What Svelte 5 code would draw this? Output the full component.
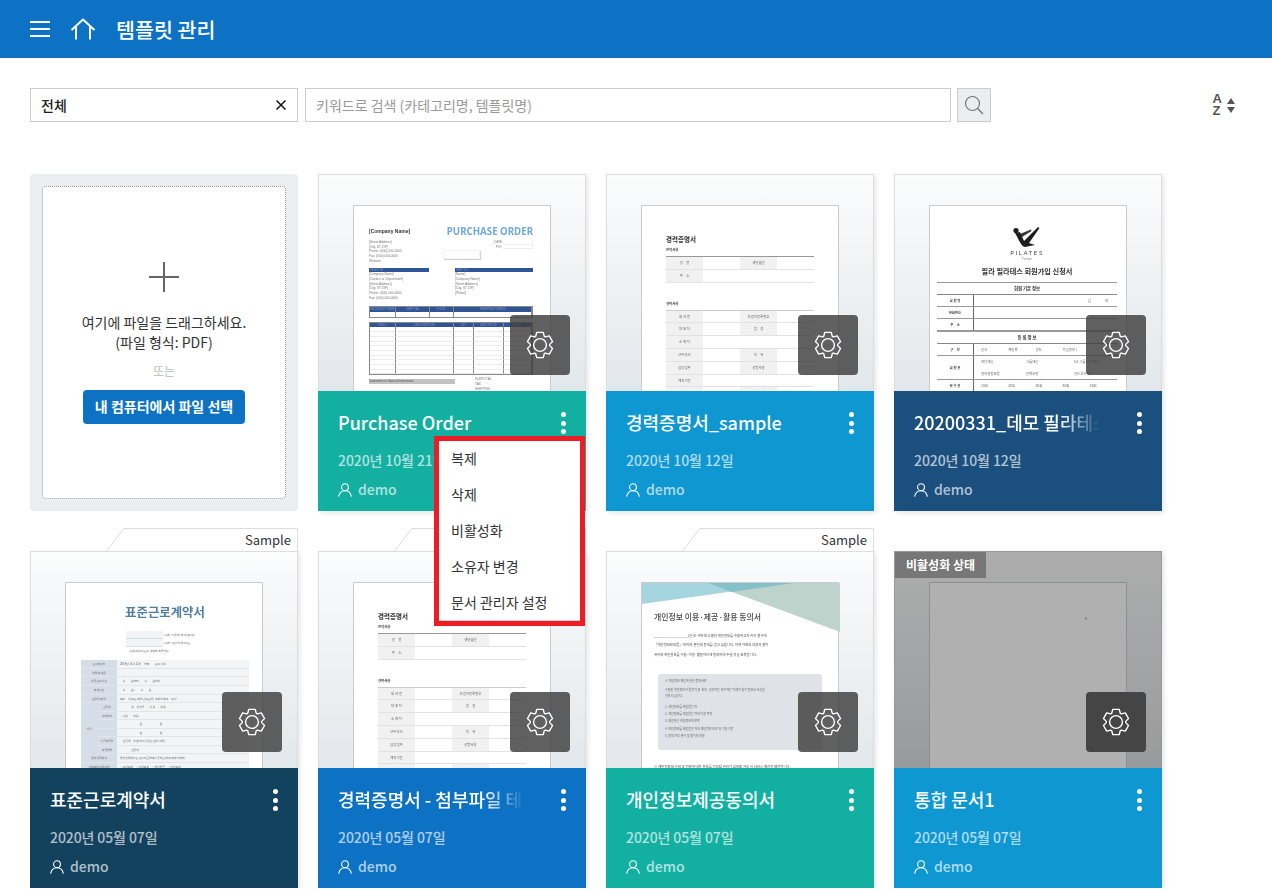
<script>
  const cards = [
    { title: 'Purchase Order', date: '2020년 10월 21일', color: '#13b0a2', doc: 'po', menu: true },
    { title: '경력증명서_sample', date: '2020년 10월 12일', color: '#0e97d0', doc: 'career' },
    { title: '20200331_데모 필라테스 회원가입', date: '2020년 10월 12일', color: '#1a4f7e', doc: 'pilates', long: true },
    { title: '표준근로계약서', date: '2020년 05월 07일', color: '#13425f', doc: 'labor', sample: true },
    { title: '경력증명서 - 첨부파일 테스트', date: '2020년 05월 07일', color: '#0e72c4', doc: 'career', sample: true, long: true },
    { title: '개인정보제공동의서', date: '2020년 05월 07일', color: '#13b0a2', doc: 'privacy', sample: true },
    { title: '통합 문서1', date: '2020년 05월 07일', color: '#0e97d0', doc: 'blank', disabled: true }
  ];

  const menuItems = ['복제', '삭제', '비활성화', '소유자 변경', '문서 관리자 설정'];

  function gearPath() {
    const out = [];
    const step = (Math.PI * 2) / 6;
    for (let i = 0; i < 6; i++) {
      const c = -Math.PI / 2 + i * step;
      const pts = [
        [9.7, c - 0.46],
        [13, c - 0.25],
        [13, c + 0.25],
        [9.7, c + 0.46]
      ];
      for (const [r, a] of pts) {
        out.push(`${(14 + r * Math.cos(a)).toFixed(2)} ${(14 + r * Math.sin(a)).toFixed(2)}`);
      }
    }
    return 'M' + out.join('L') + 'Z';
  }

  const addressLines = ['[Street Address]', '[City, ST ZIP]', 'Phone: (000) 000-0000', 'Fax: (000) 000-0000', 'Website:'];
  const vendorLines = ['[Company Name]', '[Contact or Department]', '[Street Address]', '[City, ST ZIP]', 'Phone: (000) 000-0000', 'Fax: (000) 000-0000'];
  const shipLines = ['[Name]', '[Company Name]', '[Street Address]', '[City, ST ZIP]', '[Phone]'];

  const careerTop = [['성　명', '생년월일'], ['주　소', '']];
  const careerRows = [
    ['회 사 명', '사업자등록번호'],
    ['대 표 자', '업　종'],
    ['소 재 지', ''],
    ['근무부서', '직　위'],
    ['담당업무', '상병사항'],
    ['재직기간', ''],
    ['퇴사사유', '재직증명서', '첨부하기']
  ];

  const laborTop = [
    ['근로개시일', '2019년 11월 21일　부터　　근로 장소'],
    ['업무의 내용', ''],
    ['소정근로시간', '　시　　분부터　　시　　분까지'],
    ['휴게시간', '　시　　분~　　시　　분'],
    ['근무일/휴일', '매주　일(또는 매일단위)근무, 주휴일 매주　요일']
  ];
  const laborWage = [
    ['산정액', '　　　　원　상여금　○있음　○없음'],
    ['기타급여', '○있음　○없음'],
    ['', '　　　　　　　원,　　　　　　원'],
    ['', '　　　　　　　원,　　　　　　원'],
    ['임금지급일', '　산정액　일(휴일의 경우는 전일 지급)'],
    ['지급방법', '　　　　산정액']
  ];
  const laborBottom = [
    ['연차유급휴가', '연차유급휴가는 근로기준법에서 정하는 바에 따라 부여함'],
    ['사회보험 적용여부', '□고용보험　□산재보험　□국민연금　□건강보험']
  ];

  const privacyList = ['개인정보를 제공받는 자', '개인정보를 제공받는 자의 이용 목적', '제공하는 개인정보의 항목', '개인정보를 제공받은 자의 개인정보 보유 및 이용 기간', '동의 거부 권리 및 불이익 내용'];
</script>

{#snippet poDoc()}
  <div class="page po">
    <div class="po-head">
      <strong class="po-company">[Company Name]</strong>
      <strong class="po-title">PURCHASE ORDER</strong>
    </div>
    <div class="po-info">
      <div class="tiny-lines">
        {#each addressLines as line}<div>{line}</div>{/each}
      </div>
      <div class="po-fields">
        <div class="po-field"><span>DATE</span><i></i></div>
        <div class="po-field"><span>PO#</span><i></i></div>
      </div>
    </div>
    <div class="po-stamp"></div>
    <div class="po-parties">
      <div class="po-party">
        <div class="po-bar">VENDOR</div>
        <div class="tiny-lines">{#each vendorLines as line}<div>{line}</div>{/each}</div>
      </div>
      <div class="po-party wide">
        <div class="po-bar">SHIP TO</div>
        <div class="tiny-lines">{#each shipLines as line}<div>{line}</div>{/each}</div>
      </div>
    </div>
    <div class="po-req">
      {#each ['REQUISITIONER', 'SHIP VIA', 'F.O.B.', 'SHIPPING TERMS'] as h}<div class="po-cell head">{h}</div>{/each}
      {#each [0, 1, 2, 3] as n (n)}<div class="po-cell"></div>{/each}
    </div>
    <div class="po-items">
      {#each ['ITEM #', 'DESCRIPTION', 'QTY', 'UNIT PRICE', 'TOTAL'] as h}<div class="po-cell head">{h}</div>{/each}
      {#each Array(50) as _, n (n)}<div class="po-cell row"></div>{/each}
    </div>
    <div class="po-foot">
      <div class="po-comments">Comments or Special Instructions</div>
      <div class="tiny-lines po-totals">
        <div>SUBTOTAL</div><div>TAX</div><div>SHIPPING</div><div>OTHER</div>
      </div>
    </div>
  </div>
{/snippet}

{#snippet careerDoc()}
  <div class="page career">
    <h4>경력증명서</h4>
    <p class="career-label">인적사항</p>
    <div class="career-table heavy">
      {#each careerTop as row}
        <div class="career-row">
          <span class="career-key">{row[0]}</span><span></span>
          {#if row[1]}<span class="career-key">{row[1]}</span>{/if}<span></span>
        </div>
      {/each}
    </div>
    <p class="career-label second">경력사항</p>
    <div class="career-table">
      {#each careerRows as row}
        <div class="career-row">
          <span class="career-key">{row[0]}</span><span></span>
          {#if row[1]}<span class="career-key">{row[1]}</span>{/if}<span>{row[2] || ''}</span>
        </div>
      {/each}
    </div>
  </div>
{/snippet}

{#snippet pilatesDoc()}
  <div class="page pilates">
    <svg class="pilates-logo" viewBox="0 0 30 22" width="30" height="22">
      <circle cx="4" cy="4.5" r="2.6" fill="#1c1c1c" />
      <path d="M3 7 L8 6 L12 15 L26 1 L27.5 2 L17 17 L23 19 L13 21 C9 20 7 14 3 7 Z" fill="#1c1c1c" />
      <path d="M8 8 L19 3.5 L19.5 5 L10 11 Z" fill="#333" />
    </svg>
    <div class="pilates-name">PILATES</div>
    <div class="pilates-script">Partner</div>
    <div class="pilates-title">필라 필라테스 회원가입 신청서</div>
    <div class="pilates-section">회원 기본 정보</div>
    <div class="pilates-row"><b>회 원 명</b><span class="split"><em>남</em><em>여</em></span></div>
    <div class="pilates-row"><b>전화번호</b><span></span></div>
    <div class="pilates-row"><b>주　소</b><span></span></div>
    <div class="pilates-section second">등 록 정 보</div>
    <div class="pilates-row"><b>구　분</b><span class="flow"><em>신규</em><em>재등록</em><em>양도</em><em>가입경로 (</em></span></div>
    <div class="pilates-row tall">
      <b>회 원 권</b>
      <span class="flow double">
        <em>개인레슨</em><em>그룹레슨</em><em>5:1 그룹 기구필라</em>
        <em>형색실천요법</em><em>산책운동</em><em>인드호거북 (</em>
      </span>
    </div>
    <div class="pilates-row"><b>횟 수 권</b><span class="flow"><em>10회</em><em>20회</em><em>30회</em><em>40회</em><em>50회</em></span></div>
  </div>
{/snippet}

{#snippet laborDoc()}
  <div class="page labor">
    <div class="labor-title">표준근로계약서</div>
    <div class="labor-parties">
      <div class="labor-party"><i></i><span>(이하 "사업주"라 함)과(와)</span></div>
      <div class="labor-party"><i></i><span>(이하 "근로자"라 함)은</span></div>
    </div>
    <div class="labor-note">다음과 같이 근로 계약을 체결한다.</div>
    <div class="labor-table">
      {#each laborTop as row}
        <div class="labor-row">
          <span class="labor-key">{row[0]}</span>
          <span class="labor-val">{row[1]}</span>
        </div>
      {/each}
      <div class="labor-wage">
        <span class="labor-key wage-key">임금</span>
        <div>
          {#each laborWage as row}
            <div class="labor-row sub">
              <span class="labor-key">{row[0]}</span>
              <span class="labor-val">{row[1]}</span>
            </div>
          {/each}
        </div>
      </div>
      {#each laborBottom as row}
        <div class="labor-row">
          <span class="labor-key">{row[0]}</span>
          <span class="labor-val">{row[1]}</span>
        </div>
      {/each}
    </div>
  </div>
{/snippet}

{#snippet privacyDoc()}
  <div class="page privacy">
    <svg class="privacy-art" viewBox="0 0 198 50" width="198" height="50">
      <polygon points="0,0 152,0 0,21" fill="#a5d6e0" />
      <polygon points="66,0 198,0 198,49" fill="#bfd3cd" />
      <polygon points="66,0 152,0 90,9" fill="#86c0c8" />
    </svg>
    <div class="privacy-title">개인정보 이용·제공·활용 동의서</div>
    <p class="privacy-text">
      __________________(은)는 귀하의 소중한 개인정보를 수집하고자 하는 경우에<br />
      「개인정보보호법」에 따라 본인의 동의를 얻고 있습니다. 이에 아래의 내용과 같이<br />
      귀하의 개인정보를 수집·이용·활용하는데 동의하여 주실 것을 요청합니다.
    </p>
    <div class="privacy-box">
      <p>※ 개인정보 제공에 관한 동의사항</p>
      <p>수집된 개인정보가 법적 이용·처리·공유되는 경우에는 아래와 같이 필요성 사상을<br />알려 드립니다.</p>
      <ol>
        {#each privacyList as item, i}<li>{i + 1}. {item}</li>{/each}
      </ol>
    </div>
    <p class="privacy-text last">※ 개인정보의 수집 및 이용에 대한 동의를 거부할 권리가 있으며 거부 시 서비스 제공이 제한됩니다.</p>
  </div>
{/snippet}

<header class="topbar">
  <svg width="20" height="16" viewBox="0 0 20 16" class="burger">
    <path d="M0 1H20M0 8H20M0 15H20" stroke="#fff" stroke-width="2" />
  </svg>
  <svg width="26" height="22" viewBox="0 0 26 22" class="home">
    <path d="M1.5 12 L13 1.5 L24.5 12 M6 8.5 V21.5 M20 8.5 V21.5" fill="none" stroke="#fff" stroke-width="2" />
  </svg>
  <h1>템플릿 관리</h1>
</header>

<div class="toolbar">
  <div class="select">
    <span>전체</span>
    <svg width="10" height="10" viewBox="0 0 10 10">
      <path d="M0.5 0.5L9.5 9.5M9.5 0.5L0.5 9.5" stroke="#111" stroke-width="1.5" />
    </svg>
  </div>
  <div class="search">키워드로 검색 (카테고리명, 템플릿명)</div>
  <button class="search-btn" aria-label="검색">
    <svg width="20" height="20" viewBox="0 0 20 20">
      <circle cx="8.5" cy="8.5" r="7" fill="none" stroke="#777" stroke-width="1.2" />
      <path d="M13.6 13.6L19 19" stroke="#777" stroke-width="1.4" />
    </svg>
  </button>
  <div class="sort">
    <div class="sort-letters"><span>A</span><span>Z</span></div>
    <div class="sort-arrows"><i class="up"></i><i class="down"></i></div>
  </div>
</div>

<main class="grid">
  <section class="upload">
    <div class="drop">
      <svg width="30" height="30" viewBox="0 0 30 30">
        <path d="M15 0V30M0 15H30" stroke="#666" stroke-width="2" />
      </svg>
      <p class="drop-text">여기에 파일을 드래그하세요.<br />(파일 형식: PDF)</p>
      <p class="drop-or">또는</p>
      <button class="drop-btn">내 컴퓨터에서 파일 선택</button>
    </div>
  </section>

  {#each cards as card}
    <article class="card" class:disabled={card.disabled}>
      {#if card.sample}
        <div class="sample">
          <svg width="192" height="24" viewBox="0 0 192 24">
            <path d="M0.5 23.5 L17.5 0.5 H191.5 V23.5" fill="#fff" stroke="#ddd" />
          </svg>
          <span>Sample</span>
        </div>
      {/if}
      <div class="thumb">
        {#if card.doc === 'po'}
          {@render poDoc()}
        {:else if card.doc === 'career'}
          {@render careerDoc()}
        {:else if card.doc === 'pilates'}
          {@render pilatesDoc()}
        {:else if card.doc === 'labor'}
          {@render laborDoc()}
        {:else if card.doc === 'privacy'}
          {@render privacyDoc()}
        {:else}
          <div class="page blank"><i></i></div>
        {/if}
        {#if card.disabled}<div class="badge">비활성화 상태</div>{/if}
        <div class="gear">
          <svg width="28" height="28" viewBox="0 0 28 28">
            <path d={gearPath()} fill="none" stroke="#fff" stroke-width="1.4" stroke-linejoin="round" />
            <circle cx="14" cy="14" r="6.4" fill="none" stroke="#fff" stroke-width="1.4" />
          </svg>
        </div>
      </div>
      <div class="info" style={`background: ${card.color}`}>
        <div class="info-head">
          <h3 class:long={card.long}>{card.title}</h3>
          <div class="dots"><i></i><i></i><i></i></div>
        </div>
        <div class="date">{card.date}</div>
        <div class="owner">
          <svg width="14" height="14" viewBox="0 0 14 14">
            <circle cx="7" cy="4.2" r="3.4" fill="none" stroke="#fff" stroke-width="1.1" />
            <path d="M0.6 13.6 C1.4 9.8 3.8 7.8 7 7.8 C10.2 7.8 12.6 9.8 13.4 13.6" fill="none" stroke="#fff" stroke-width="1.1" />
          </svg>
          <span>demo</span>
        </div>
      </div>
      {#if card.menu}
        <ul class="menu">
          {#each menuItems as item}<li>{item}</li>{/each}
        </ul>
      {/if}
    </article>
  {/each}
</main>

<style>
  :global(body) {
    font-family: "Noto Sans CJK KR", "Noto Sans", sans-serif;
    color: #333;
    background: #fff;
  }

  p, h1, h3, h4, ul, ol {
    margin: 0;
    padding: 0;
  }

  .topbar {
    height: 58px;
    display: flex;
    align-items: center;
    padding-left: 30px;
    background: #0e72c4;
  }

  .home {
    margin-left: 20px;
    margin-top: -1px;
  }

  .topbar h1 {
    margin-left: 20px;
    font-size: 20.6px;
    font-weight: 500;
    color: #fff;
  }

  .toolbar {
    display: flex;
    align-items: center;
    height: 34px;
    margin-top: 30px;
    padding: 0 37px 0 30px;
    font-size: 14px;
  }

  .select {
    width: 268px;
    height: 34px;
    box-sizing: border-box;
    display: flex;
    align-items: center;
    justify-content: space-between;
    padding: 0 11px 0 10px;
    border: 1px solid #ccc;
    font-weight: 500;
    color: #222;
  }

  .search {
    width: 646px;
    height: 34px;
    box-sizing: border-box;
    margin-left: 7px;
    padding: 0 10px;
    line-height: 32px;
    border: 1px solid #ccc;
    color: #999;
  }

  .search-btn {
    width: 34px;
    height: 34px;
    margin-left: 6px;
    padding: 0;
    display: grid;
    place-items: center;
    border: 1px solid #ccc;
    background: #ebeef1;
  }

  .sort {
    margin-left: auto;
    display: flex;
    align-items: center;
    gap: 5px;
  }

  .sort-letters {
    display: grid;
    font-family: "Liberation Sans", sans-serif;
    font-size: 13px;
    font-weight: 700;
    line-height: 12px;
    color: #555;
  }

  .sort-arrows {
    display: grid;
    gap: 3px;
  }

  .sort-arrows i {
    width: 0;
    height: 0;
    border-left: 4px solid transparent;
    border-right: 4px solid transparent;
  }

  .sort-arrows .up {
    border-bottom: 6px solid #555;
  }

  .sort-arrows .down {
    border-top: 6px solid #555;
  }

  .grid {
    display: grid;
    grid-template-columns: repeat(4, 268px);
    column-gap: 20px;
    row-gap: 40px;
    margin-top: 52px;
    padding-left: 30px;
  }

  .upload {
    height: 337px;
    box-sizing: border-box;
    padding: 12px;
    border-radius: 4px;
    background: #ebeef1;
  }

  .drop {
    height: 100%;
    box-sizing: border-box;
    display: flex;
    flex-direction: column;
    align-items: center;
    padding-top: 75px;
    border: 1px dotted #999;
    border-radius: 4px;
    background: #fff;
  }

  .drop-text {
    margin-top: 20px;
    font-size: 14px;
    line-height: 20px;
    text-align: center;
    color: #333;
  }

  .drop-or {
    margin-top: 9px;
    font-size: 12px;
    line-height: 20px;
    color: #bbb;
  }

  .drop-btn {
    width: 162px;
    height: 34px;
    margin-top: 9px;
    padding: 0 0 2px;
    border: 0;
    border-radius: 4px;
    background: #0e72c4;
    color: #fff;
    font-family: inherit;
    font-size: 14px;
    font-weight: 700;
  }

  .card {
    position: relative;
    height: 337px;
    box-shadow: 2px 2px 5px rgba(0, 0, 0, 0.1);
  }

  .sample {
    position: absolute;
    right: 0;
    top: -23px;
    width: 192px;
    height: 24px;
  }

  .sample svg {
    display: block;
  }

  .sample span {
    position: absolute;
    right: 7px;
    top: 1px;
    font-size: 13px;
    line-height: 22px;
    color: #333;
  }

  .thumb {
    position: relative;
    height: 217px;
    box-sizing: border-box;
    overflow: hidden;
    padding: 30px 0 0 34px;
    border: 1px solid #ddd;
    border-bottom: 0;
    background: linear-gradient(#fbfcfc, #e2e7eb);
  }

  .disabled .thumb {
    border-color: #999;
    background: linear-gradient(#adadad, #989b9d);
  }

  .page {
    width: 198px;
    height: 300px;
    box-sizing: border-box;
    border: 1px solid #ccc;
    background: #fff;
    color: #333;
    filter: blur(0.45px);
  }

  .page.blank {
    position: relative;
    border-color: #8e8e8e;
    background: #b0b0b0;
  }

  .blank i {
    position: absolute;
    left: 155px;
    top: 34px;
    width: 2px;
    height: 3px;
    background: #8c8c8c;
  }

  .badge {
    position: absolute;
    left: 0;
    top: 0;
    width: 91px;
    height: 26px;
    background: #777;
    color: #fff;
    font-size: 12px;
    font-weight: 700;
    line-height: 25px;
    text-align: center;
  }

  .gear {
    position: absolute;
    right: 15px;
    top: 140px;
    width: 60px;
    height: 60px;
    display: grid;
    place-items: center;
    border-radius: 4px;
    background: rgba(64, 64, 64, 0.83);
  }

  .disabled .gear {
    background: #454546;
  }

  .info {
    height: 120px;
    box-sizing: border-box;
    padding: 19px 20px 0;
    color: #fff;
  }

  .info-head {
    display: flex;
    justify-content: space-between;
    align-items: center;
    height: 24px;
  }

  .info-head h3 {
    width: 186px;
    overflow: hidden;
    white-space: nowrap;
    font-size: 18px;
    font-weight: 500;
    line-height: 24px;
  }

  .info-head h3.long {
    -webkit-mask-image: linear-gradient(to right, #000 78%, transparent);
    mask-image: linear-gradient(to right, #000 78%, transparent);
  }

  .dots {
    display: grid;
    gap: 3.5px;
    margin-top: 2px;
  }

  .dots i {
    width: 5px;
    height: 5px;
    border-radius: 50%;
    background: #fff;
  }

  .date {
    margin-top: 16px;
    font-size: 14px;
    font-weight: 500;
    letter-spacing: -0.1px;
    line-height: 20px;
    color: rgba(255, 255, 255, 0.68);
  }

  .owner {
    display: flex;
    align-items: center;
    gap: 6px;
    margin-top: 9px;
    font-size: 14px;
    font-weight: 500;
    line-height: 20px;
    color: rgba(255, 255, 255, 0.68);
  }

  .owner svg {
    margin-top: 1px;
  }

  .menu {
    position: absolute;
    left: 116px;
    top: 262px;
    z-index: 10;
    width: 151px;
    box-sizing: border-box;
    list-style: none;
    border: 5px solid #ee1c25;
    background: #fff;
    box-shadow: inset 0 -1px 0 #ccc;
  }

  .menu li {
    height: 36px;
    padding-left: 12px;
    font-size: 14px;
    line-height: 34px;
    color: #333;
  }

  /* purchase order thumbnail */
  .po {
    padding: 20px 17px 0 15px;
    font-family: "Liberation Sans", sans-serif;
  }

  .po-head {
    display: flex;
    justify-content: space-between;
    align-items: center;
    height: 10px;
  }

  .po-company {
    font-size: 5px;
  }

  .po-title {
    font-family: "Noto Sans", sans-serif;
    font-size: 9.7px;
    color: #6fa8dc;
  }

  .po-info {
    display: flex;
    justify-content: space-between;
    align-items: flex-start;
    margin-top: 4px;
  }

  .tiny-lines {
    font-size: 3.2px;
    line-height: 4.7px;
    color: #777;
  }

  .po-fields {
    font-size: 3px;
    line-height: 4.7px;
    color: #777;
  }

  .po-field {
    display: flex;
    justify-content: flex-end;
    gap: 1px;
  }

  .po-field i {
    width: 30px;
    box-sizing: border-box;
    border-bottom: 1px solid #eee;
    border-right: 1px solid #eee;
  }

  .po-stamp {
    width: 37px;
    height: 9px;
    margin: -14px 0 0 74px;
    border: 1px solid #f2f2f2;
    box-sizing: border-box;
    background: #fff;
    box-shadow: 1px 1px 1px #d4d4d4;
  }

  .po-parties {
    display: flex;
    justify-content: space-between;
    margin-top: 9px;
  }

  .po-party {
    width: 60px;
  }

  .po-party.wide {
    width: 78px;
  }

  .po-bar {
    height: 4.7px;
    padding-left: 1px;
    background: #2f5597;
    color: #7f97c6;
    font-size: 3px;
    line-height: 4.7px;
  }

  .po-req {
    display: grid;
    grid-template-columns: 26fr 35fr 25fr 79fr;
    margin-top: 6px;
    border: 0.5px solid #888;
  }

  .po-items {
    display: grid;
    grid-template-columns: 26fr 60fr 20fr 30fr 29fr;
    margin-top: 4px;
    border: 0.5px solid #888;
  }

  .po-cell {
    height: 4.7px;
    border-right: 0.7px solid #888;
    box-sizing: border-box;
    overflow: hidden;
    text-align: center;
    font-size: 3px;
    line-height: 4.7px;
  }

  .po-cell.head {
    background: #2f5597;
    color: #7f97c6;
  }

  .po-cell.row {
    border-bottom: 0.5px solid #ececec;
  }

  .po-foot {
    display: flex;
    justify-content: space-between;
    margin-top: 4px;
  }

  .po-comments {
    width: 86px;
    height: 5px;
    background: #c2c2c2;
    font-size: 3px;
    line-height: 5px;
    color: #555;
  }

  .po-totals {
    width: 58px;
    margin-top: -2px;
  }

  /* career certificate thumbnail */
  .career {
    padding: 28px 24px 0;
  }

  .career h4 {
    font-size: 6.5px;
    font-weight: 700;
    line-height: 10px;
  }

  .career-label {
    margin-top: 3px;
    font-size: 3.4px;
    font-weight: 700;
    line-height: 6px;
  }

  .career-label.second {
    margin-top: 18px;
  }

  .career-table {
    margin-top: 3px;
    border-top: 0.6px solid #ccc;
  }

  .career-table.heavy {
    border-top: 1.4px solid #999;
  }

  .career-row {
    display: grid;
    grid-template-columns: 37px 37px 37px 37px;
    height: 11.8px;
    border-bottom: 0.6px solid #e2e2e2;
    font-size: 3.4px;
    line-height: 11px;
    text-align: center;
    color: #666;
  }

  .career-key {
    background: #f1f1f1;
  }

  /* pilates application thumbnail */
  .pilates {
    padding: 20px 9px 0 7px;
    text-align: center;
  }

  .pilates-logo {
    display: block;
    margin: 0 auto;
  }

  .pilates-name {
    margin-top: 1px;
    font-family: "Lato", sans-serif;
    font-size: 6px;
    letter-spacing: 1.6px;
    line-height: 7px;
    color: #444;
  }

  .pilates-script {
    font-family: "Liberation Serif", serif;
    font-style: italic;
    font-size: 3.5px;
    line-height: 6px;
    color: #888;
  }

  .pilates-title {
    margin-top: 4px;
    font-size: 7.2px;
    font-weight: 700;
    line-height: 10px;
  }

  .pilates-section {
    margin-top: 6px;
    height: 11px;
    border-top: 1.4px solid #999;
    border-bottom: 1px solid #888;
    font-size: 4.4px;
    font-weight: 700;
    line-height: 10px;
  }

  .pilates-section.second {
    margin-top: 0;
  }

  .pilates-row {
    display: grid;
    grid-template-columns: 37px 1fr;
    height: 12px;
    box-sizing: border-box;
    border-bottom: 0.8px solid #999;
    font-size: 3.4px;
    line-height: 11px;
  }

  .pilates-row.tall {
    height: 24px;
  }

  .pilates-row.tall b {
    line-height: 23px;
  }

  .pilates-row b {
    border-right: 0.8px solid #666;
  }

  .pilates-row em {
    font-style: normal;
    color: #666;
  }

  .split {
    display: flex;
    justify-content: flex-end;
    gap: 14px;
    padding-right: 9px;
  }

  .flow {
    display: grid;
    grid-template-columns: repeat(5, 1fr);
    padding-left: 7px;
    text-align: left;
  }

  .flow.double {
    grid-template-columns: 45px 48px 1fr;
  }

  /* labor contract thumbnail */
  .labor {
    padding: 20px 13px 0 15px;
  }

  .labor-title {
    font-size: 12.4px;
    font-weight: 700;
    line-height: 18px;
    text-align: center;
    color: #4f7fa0;
  }

  .labor-parties {
    margin-top: 10px;
  }

  .labor-party {
    display: flex;
    align-items: center;
    gap: 1px;
    height: 8px;
    margin-left: 45px;
    font-size: 2.8px;
    color: #666;
  }

  .labor-party i {
    width: 37px;
    height: 8px;
    box-sizing: border-box;
    background: #f2f3f5;
    border-bottom: 1px solid #d5e0e6;
  }

  .labor-note {
    margin-left: 49px;
    font-size: 2.8px;
    line-height: 8px;
    color: #666;
  }

  .labor-table {
    margin-top: 5px;
    background: #f3f4f5;
  }

  .labor-row {
    display: grid;
    grid-template-columns: 36px 1fr;
    height: 8.7px;
    box-sizing: border-box;
    border-bottom: 0.6px solid #dfe5ea;
    font-size: 2.8px;
    line-height: 8px;
    color: #666;
  }

  .labor-row.sub {
    grid-template-columns: 20px 1fr;
    height: 8.5px;
  }

  .labor-key {
    background: #d5dde6;
    text-align: center;
    white-space: nowrap;
    overflow: hidden;
  }

  .labor-val {
    padding-left: 3px;
    white-space: nowrap;
    overflow: hidden;
  }

  .labor-wage {
    display: grid;
    grid-template-columns: 16px 1fr;
    font-size: 2.8px;
    color: #666;
  }

  .wage-key {
    display: grid;
    place-items: center;
  }

  /* privacy consent thumbnail */
  .privacy {
    color: #444;
  }

  .privacy-art {
    display: block;
    margin-bottom: -22px;
  }

  .privacy-title {
    padding-left: 12px;
    font-size: 7.9px;
    font-weight: 500;
    line-height: 12px;
  }

  .privacy-text {
    margin-top: 8px;
    padding-left: 12px;
    font-size: 3.4px;
    line-height: 9.3px;
    white-space: nowrap;
  }

  .privacy-text.last {
    margin-top: 12px;
  }

  .privacy-box {
    width: 164px;
    height: 76px;
    box-sizing: border-box;
    margin: 15px 0 0 16px;
    padding: 4px 7px;
    border-radius: 2px;
    background: #dfe2e6;
    font-size: 3px;
    line-height: 6px;
    color: #666;
  }

  .privacy-box p {
    margin-bottom: 3px;
  }

  .privacy-box ol {
    margin-top: 5px;
    list-style: none;
    line-height: 7.2px;
  }
</style>
